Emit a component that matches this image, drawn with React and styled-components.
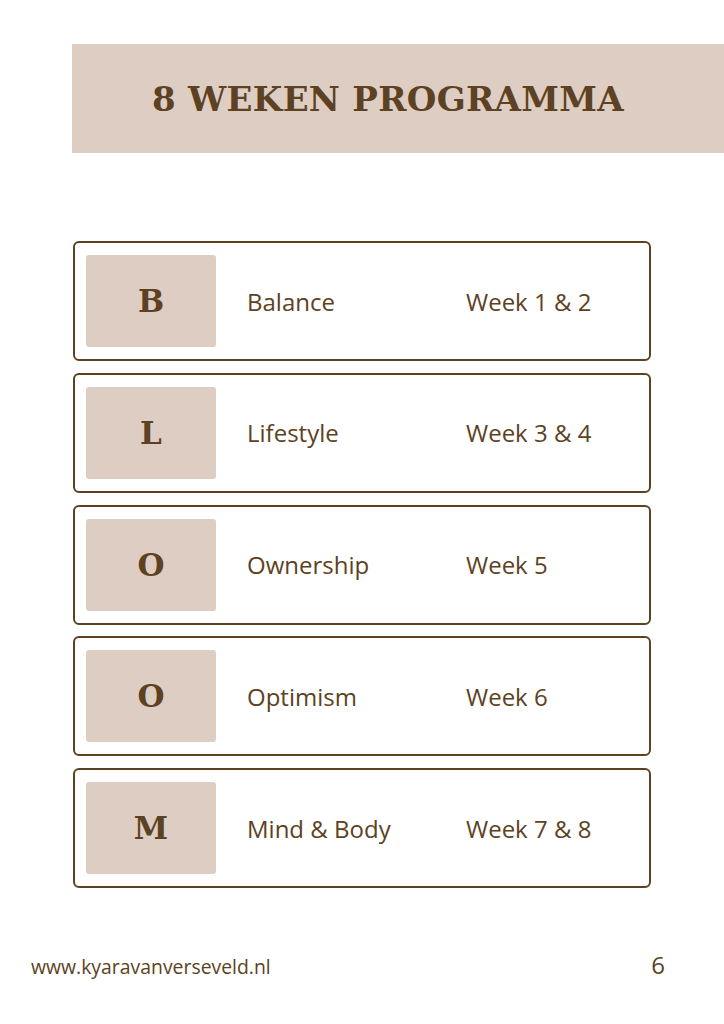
import React from "react";
import styled, { createGlobalStyle } from "styled-components";

const Global = createGlobalStyle`
  html, body { margin: 0; padding: 0; background: #ffffff; }
  body { width: 724px; height: 1024px; overflow: hidden; }
`;

const brown = "#5c4222";
const beige = "#decdc3";

const Page = styled.div`
  width: 724px;
  height: 1024px;
  display: flex;
  flex-direction: column;
  box-sizing: border-box;
  padding-top: 44px;
  font-family: "Open Sans", "Liberation Sans", sans-serif;
  color: ${brown};
`;

const Banner = styled.div`
  margin-left: 72px;
  height: 109px;
  background: ${beige};
  display: flex;
  align-items: center;
  padding-left: 80px;
`;

const Title = styled.h1`
  margin: 0;
  font-family: "DejaVu Serif", "Liberation Serif", serif;
  font-weight: 700;
  font-size: 34px;
  letter-spacing: 0.3px;
  color: ${brown};
`;

const List = styled.div`
  margin: 88px 0 0 73px;
  width: 578px;
  display: flex;
  flex-direction: column;
  gap: 11.75px;
`;

const Card = styled.div`
  box-sizing: border-box;
  height: 120px;
  border: 2px solid ${brown};
  border-radius: 6px;
  padding: 12px 11px;
  display: flex;
  align-items: center;
`;

const Letter = styled.div`
  width: 130px;
  height: 92px;
  flex: none;
  background: ${beige};
  border-radius: 3px;
  display: flex;
  align-items: center;
  justify-content: center;
  font-family: "DejaVu Serif", "Liberation Serif", serif;
  font-weight: 700;
  font-size: 31px;
  color: ${brown};
`;

const Label = styled.div`
  margin-left: 31px;
  width: 219px;
  font-size: 24px;
`;

const Weeks = styled.div`
  font-size: 24px;
`;

const Footer = styled.div`
  margin-top: auto;
  margin-bottom: 43px;
  padding: 0 59px 0 31px;
  display: flex;
  justify-content: space-between;
  align-items: baseline;
`;

const Site = styled.span`
  font-size: 19.4px;
`;

const PageNum = styled.span`
  font-size: 24px;
`;

const rows = [
  { l: "B", name: "Balance", week: "Week 1 & 2" },
  { l: "L", name: "Lifestyle", week: "Week 3 & 4" },
  { l: "O", name: "Ownership", week: "Week 5" },
  { l: "O", name: "Optimism", week: "Week 6" },
  { l: "M", name: "Mind & Body", week: "Week 7 & 8" },
];

export default function App() {
  return (
    <>
      <Global />
      <Page>
        <Banner>
          <Title>8 WEKEN PROGRAMMA</Title>
        </Banner>
        <List>
          {rows.map((r, i) => (
            <Card key={i}>
              <Letter>{r.l}</Letter>
              <Label>{r.name}</Label>
              <Weeks>{r.week}</Weeks>
            </Card>
          ))}
        </List>
        <Footer>
          <Site>www.kyaravanverseveld.nl</Site>
          <PageNum>6</PageNum>
        </Footer>
      </Page>
    </>
  );
}
